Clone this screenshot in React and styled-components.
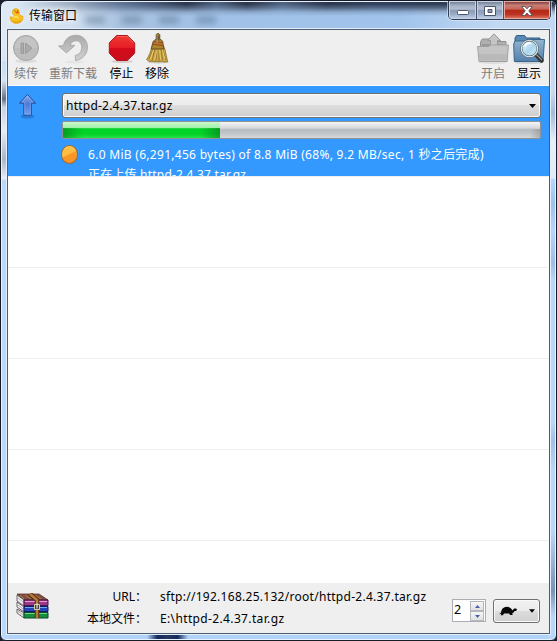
import React from "react";
import styled, { createGlobalStyle } from "styled-components";

const Global = createGlobalStyle`
  * { box-sizing: border-box; }
  html, body { margin: 0; padding: 0; overflow: hidden; }
  body {
    width: 557px;
    height: 641px;
    background: #1a1f2b;
    font-family: "Noto Sans", "Noto Sans CJK SC", sans-serif;
    font-size: 12px;
    color: #000;
  }
`;

const Frame = styled.div`
  width: 557px;
  height: 641px;
  display: flex;
  flex-direction: column;
  border: 1px solid #171c28;
  border-radius: 7px 7px 6px 6px;
  overflow: hidden;
  padding: 0 5px 5px;
  box-shadow: inset 0 0 0 1px #e6f2fd;
  background:
    linear-gradient(90deg, transparent, #14285c 25%, #27365c 50%, #14285c 75%, transparent) 146px 100% / 41px 6px no-repeat,
    linear-gradient(#ffffff00 29px, #d6e2f1 80px, #657183 98px, #c6d2e1 106px, #e7edf5 130px, #a9b6c7 158px, #e8eff7 178px, #b9d9fa 179px) 0 0 / 8px 100% no-repeat,
    linear-gradient(#ffffff00 29px, #cbdaf0 90px, #a3bbdc 112px, #e9effa 140px, #e0eaf9 177px, #b5d8ff 178px, #9fc2eb 203px, #b5d6fc 230px, #9dbfe6 262px, #b8d8fb 280px, #b8d8fb 420px, #9fc0e8 440px, #b8d8fb 470px, #b8d8fb 530px, #7793b5 590px, #b8d8fb 615px) 100% 0 / 8px 100% no-repeat,
    linear-gradient(90deg, #dfe9f6 0, #d1dfef 70px, #a8c2e1 120px, #a1c1e8 230px, #a1c4ec 400px, #c3d8f2 500px, #c3d8f2 100%) 0 0 / 100% 60px no-repeat,
    #b1d3f8;
`;

const TitleBar = styled.header`
  height: 28px;
  flex: none;
  display: flex;
  align-items: flex-start;
  position: relative;
  &::before {
    content: "";
    position: absolute;
    inset: 1px -4px auto;
    height: 14px;
    background: linear-gradient(90deg, #566b88 0, #40526f 150px, #222c40 185px, #4a5d7a 215px, #222b3d 245px, #4a5d7a 280px, #222c40 325px, #2a3852 370px, #1c2636 100%);
    mask-image: linear-gradient(#000 2px, #000a 6px, #0003 10px, transparent 14px), linear-gradient(90deg, transparent 15px, #0008 90px, #000e 150px);
    mask-composite: intersect;
  }
  > * { position: relative; }
`;

const Title = styled.h1`
  margin: 5px 0 0 4px;
  font: 12px/18px "Noto Sans CJK SC", sans-serif;
  text-shadow: 0 0 5px #fff, 0 0 7px #fff;
`;

const TitleIcon = styled.svg`
  margin: 7px 0 0 3px;
  filter: drop-shadow(0 0 2px #fff8);
`;

const Smudges = styled.div`
  display: flex;
  gap: 17px;
  margin: 15px 0 0 8px;
  filter: blur(3px);
  opacity: 0.35;
`;

const Smudge = styled.i`
  width: 20px;
  height: 8px;
  background: #365371;
`;

const WindowButtons = styled.div`
  display: flex;
  margin-left: auto;
  height: 19px;
  border: 1px solid #303c52;
  border-top: 0;
  border-radius: 0 0 5px 5px;
  overflow: hidden;
  box-shadow: 0 0 0 1px #dcebfc99;
`;

const WindowButton = styled.button`
  width: ${(p) => p.$width}px;
  padding: 0;
  border: 0;
  border-left: ${(p) => (p.$first ? "0" : "1px solid #46526a")};
  display: grid;
  place-items: center;
  align-content: center;
  padding-top: ${(p) => (p.$first ? 5 : 1)}px;
  box-shadow: inset 0 0 0 1px ${(p) => (p.$close ? "#eca89b" : "#c7d2e4")};
  background: ${(p) =>
    p.$close
      ? "linear-gradient(#6e3437 0, #c77e75 25%, #c76457 46%, #b42717 50%, #bc3522 75%, #df8068 100%)"
      : "linear-gradient(#69778c 0, #a9b5c8 28%, #b3bfd0 46%, #8b9bb5 50%, #96a7c3 70%, #c3d3ea 100%)"};
  svg { display: block; }
`;

const Client = styled.main`
  flex: 1;
  min-height: 0;
  display: flex;
  flex-direction: column;
  border: 1px solid #4c5d71;
  box-shadow: 0 0 0 1px #e3f0fc;
  background: #fff;
  margin: 0 1px 1px;
`;

const Toolbar = styled.nav`
  flex: none;
  height: 56px;
  display: flex;
  background: #efefef;
  border-bottom: 1px solid #fbfbfb;
  padding: 3px 3px 0 5px;
`;

const ToolItem = styled.button`
  width: ${(p) => p.$width}px;
  margin-left: ${(p) => (p.$push ? "auto" : `${p.$gap || 0}px`)};
  padding: 0;
  border: 0;
  background: none;
  display: flex;
  flex-direction: column;
  align-items: center;
  font: 12px/18px "Noto Sans CJK SC", sans-serif;
  white-space: nowrap;
  color: ${(p) => (p.$disabled ? "#7d7d7d" : "#000")};
  svg { display: block; flex: none; margin-bottom: -1px; }
`;

const List = styled.section`
  flex: 1;
  min-height: 0;
  overflow: hidden;
`;

const Row = styled.div`
  height: 91px;
  border-bottom: 1px solid #eeeeee;
  background: ${(p) => (p.$active ? "#3399ff" : "#fff")};
  display: grid;
  grid-template-columns: 54px 479px;
  overflow: hidden;
`;

const Direction = styled.div`
  padding: 7px 0 0 9px;
`;

const Details = styled.div`
  padding-top: 7px;
  min-width: 0;
`;

const Combo = styled.div`
  height: 25px;
  border: 1px solid #707070;
  border-radius: 3px;
  box-shadow: inset 0 0 0 1px #fafafa;
  background: linear-gradient(#f2f2f2 0, #ebebeb 48%, #dddddd 50%, #cfcfcf 100%);
  display: flex;
  align-items: center;
  justify-content: space-between;
  padding: 0 4px 0 3px;
  letter-spacing: 0.23px;
`;

const Track = styled.div`
  height: 18px;
  margin-top: 3px;
  border: 1px solid #929292;
  border-radius: 2px;
  background:
    linear-gradient(90deg, #7778 0, transparent 8px, transparent 467px, #7776 100%) 0 7px / 100% 9px no-repeat,
    linear-gradient(#f5f5f5 0, #d7dadd 35%, #c9cdd0 43%, #b6bcc1 48%, #c4c8cc 75%, #d6d9db 100%);
`;

const Fill = styled.div`
  height: 100%;
  background:
    linear-gradient(90deg, #08791999 0, transparent 20px, transparent 137px, #08791999 100%) 0 6px / 100% 11px no-repeat,
    linear-gradient(#c9f8cc 0, #a2efaa 36%, #01d328 42%, #03d327 76%, #24e64a 100%);
`;

const Status = styled.div`
  display: grid;
  grid-template-columns: 26px 1fr;
  margin-top: 6px;
  margin-left: -1px;
  color: #fff;
  line-height: 20px;
  white-space: nowrap;
`;

const Light = styled.div`
  width: 17px;
  height: 19px;
  border-radius: 50%;
  border: 1px solid #a66822;
  box-shadow: inset 0 1px 1px #ffd87c;
  background: linear-gradient(155deg, #ffbd42 0 44%, #f9982a 52%, #f79120 100%);
`;

const StatusText = styled.div`
  padding-left: 1px;
  letter-spacing: ${(p) => p.$spacing || 0}px;
`;

const Footer = styled.footer`
  flex: none;
  height: 50px;
  background: #efefef;
  display: grid;
  grid-template-columns: 44px 96px 292px 41px 47px;
  align-items: start;
  padding-left: 8px;
`;

const Archive = styled.svg`
  display: block;
  margin-top: 10px;
`;

const Lines = styled.div`
  padding-top: 3px;
  line-height: 22px;
  white-space: nowrap;
  text-align: ${(p) => (p.$right ? "right" : "left")};
  padding-left: ${(p) => (p.$right ? 0 : 4)}px;
  padding-right: ${(p) => (p.$right ? 9 : 0)}px;
`;

const Line = styled.div`
  letter-spacing: ${(p) => p.$spacing || 0}px;
`;

const Spinner = styled.div`
  width: 34px;
  height: 23px;
  margin-top: 16px;
  margin-left: 4px;
  border: 1px solid #abadb3;
  background: #fff;
  display: flex;
  justify-content: space-between;
  padding-left: 1px;
  line-height: 20px;
  font-size: 12.5px;
`;

const Steps = styled.div`
  display: grid;
  grid-template-rows: 10px 10px;
  gap: 0;
  width: 15px;
  padding: 1px 1px 0 0;
`;

const Step = styled.button`
  padding: 0;
  border: 1px solid #b5b7be;
  background: linear-gradient(#f6f6f6, #e2e2e2);
  display: grid;
  place-items: center;
  svg { display: block; }
`;

const SpeedButton = styled.button`
  width: 47px;
  height: 24px;
  margin-top: 16px;
  margin-left: 4px;
  border: 1px solid #707070;
  border-radius: 3px;
  box-shadow: inset 0 0 0 1px #fafafa;
  background: linear-gradient(#f2f2f2 0, #ebebeb 48%, #dddddd 50%, #cfcfcf 100%);
  display: flex;
  align-items: center;
  justify-content: space-between;
  padding: 0 4px 0 5px;
`;

const Duck = () => (
  <TitleIcon width="16" height="16" viewBox="0 0 16 16">
    <path d="M1.200 8.800 4 9.300c1.300-.6 1.500-1.300.8-2C2.300 5 3.200.8 6.600.6c3.200-.1 4.800 3 3.200 5.700 1.700.5 2.300 1.900 4 1.800.8 4.500-1.600 7.300-6.400 7.300-4.300 0-6.500-2.500-6.200-6.600Z" fill="#f8c21c" stroke="#d99710" strokeWidth=".6" />
    <path d="M6 4.300c1.400-1 3-.9 4.200 0-.6 1.500-2.900 1.900-4.200 0Z" fill="#e9501c" />
    <circle cx="6" cy="2.800" r=".6" fill="#6b4712" />
    <circle cx="8.600" cy="2.800" r=".6" fill="#6b4712" />
    <path d="M3 12c2.500 2.200 6.500 2.200 9.500-.5-.8 4-8 4.600-9.500.5Z" fill="#e39b10" />
    <path d="M4.500 9.500c1.500-.8 3.500-.8 5 .2" fill="none" stroke="#ffe96c" strokeWidth="1.300" />
  </TitleIcon>
);

const ResumeIcon = () => (
  <svg width="32" height="32" viewBox="0 0 32 32">
    <ellipse cx="16" cy="28" rx="11" ry="2" fill="#ddd" />
    <circle cx="16" cy="15" r="12.500" fill="#bdbdbd" stroke="#a5a5a5" />
    <path d="M5 15a11 11 0 0 1 22 0" fill="#c8c8c8" opacity=".7" />
    <path d="M11 10h2.500v10.500H11ZM15.500 10l6.500 5.200-6.500 5.300Z" fill="#aaa" stroke="#949494" strokeWidth=".8" />
  </svg>
);

const ReloadIcon = () => (
  <svg width="32" height="32" viewBox="0 0 32 32">
    <defs>
      <linearGradient id="reload" x2="0" y2="1"><stop stopColor="#aaa" /><stop offset="1" stopColor="#d0d0d0" /></linearGradient>
    </defs>
    <ellipse cx="18" cy="29" rx="10" ry="1.500" fill="#e5e5e5" />
    <path d="M1.500 13 6.500 12.500C7.500 6 13 2 19.500 2.200 26 2.500 30.500 7.500 30.500 14c0 7-4.500 12.500-12 13.500l-.3-5c4-.8 6.500-4 6.500-8 0-4-2.300-6.700-5.700-6.700-3 0-5 1.700-5.700 4.700l4.700-.2L9.500 20Z" fill="url(#reload)" stroke="#a3a3a3" strokeWidth=".8" />
  </svg>
);

const StopIcon = () => (
  <svg width="32" height="32" viewBox="0 0 32 32">
    <defs>
      <linearGradient id="stop" x2="0" y2="1"><stop stopColor="#ef3a30" /><stop offset=".5" stopColor="#e51d25" /><stop offset=".51" stopColor="#d40b1a" /><stop offset="1" stopColor="#c70f1d" /></linearGradient>
    </defs>
    <ellipse cx="16" cy="28.500" rx="11" ry="1.500" fill="#d7caca" />
    <path d="M10.700 2.500h10.600l7.400 7.300v10.400l-7.400 7.300H10.700l-7.400-7.300V9.800Z" fill="url(#stop)" stroke="#ad1420" />
    <path d="M11.100 3.500h9.800l6.800 6.700" fill="none" stroke="#ff7065" strokeWidth=".7" />
  </svg>
);

const BroomIcon = () => (
  <svg width="32" height="32" viewBox="0 0 32 32">
    <ellipse cx="17" cy="29" rx="11" ry="1.500" fill="#cecbbf" />
    <path d="M11.500 12h10.500l2 4.500 2.700 12.300-3.700.2-2.500-.8-2 .8-2.500-.6-2 .4-3-.6-2.500.2-3-1.900C8.500 22.500 9.600 18 10.500 15Z" fill="#cda94b" stroke="#82601c" strokeWidth=".7" />
    <path d="M12 16 8 26m6-10-3 11.500m5-11-1.200 11M18 17v11m2-12 1.500 11M21.500 16l3.500 11" stroke="#8b681e" strokeWidth=".8" fill="none" />
    <path d="M13 15 9.500 26m6.500-9-2.500 10m5-10 1 9m1.500-10 3 10" stroke="#f1d778" strokeWidth=".8" fill="none" />
    <path d="M15.200 2c.2-2 3.400-2 3.600 0v4l2.800 2 1.400 8H10.300L12 8.500l3.200-2.500Z" fill="#ad852e" stroke="#55401f" strokeWidth=".8" />
    <path d="M11.300 11.300 22 12.500M12.200 8.800l9.300 1" stroke="#a33a20" strokeWidth="1.100" />
    <path d="M15.400 2.500h3v5h-3Z" fill="#665334" />
    <path d="M16.200 2v8" stroke="#d0b581" strokeWidth=".7" />
  </svg>
);

const OpenIcon = () => (
  <svg width="32" height="32" viewBox="0 0 32 32">
    <ellipse cx="16" cy="29.500" rx="14" ry="1.500" fill="#ddd" />
    <path d="M3.500 17V9l1.800-3h8l2 2.500H29v9" fill="#b0b0b0" stroke="#929292" />
    <path d="M5 11h21v4H5Z" fill="#999" />
    <path d="m17 .8 6.500 6.700h-3v7h-7v-7h-3Z" fill="#c5c5c5" stroke="#989898" />
    <path d="M.6 13.500h11l2-1.500h17.800l-1.200 16.500H2Z" fill="#c4c4c4" stroke="#a1a1a1" />
    <path d="M2 21h28l-.6 6.500H2.600Z" fill="#b9b9b9" />
  </svg>
);

const ShowIcon = () => (
  <svg width="32" height="32" viewBox="0 0 32 32">
    <defs>
      <linearGradient id="folder" x2="0" y2="1"><stop stopColor="#93b5d1" /><stop offset="1" stopColor="#527fac" /></linearGradient>
      <linearGradient id="lens" x2="1" y2="1"><stop stopColor="#f4fbff" /><stop offset=".55" stopColor="#a9d5ed" /><stop offset="1" stopColor="#d9f3fc" /></linearGradient>
    </defs>
    <ellipse cx="16" cy="29.500" rx="14" ry="1.500" fill="#cbd0d4" />
    <path d="M2 12V5l1.500-2.500h8L13.500 5H27v8" fill="#5989b4" stroke="#315d87" />
    <path d="M.7 11 2 8h10l2-1.500h17.500L30 28.500H1.300Z" fill="url(#folder)" stroke="#3b678f" />
    <path d="m23 21.500 5.500 6" stroke="#33383b" strokeWidth="4.500" strokeLinecap="round" />
    <path d="m22.500 20.500 6 6.200" stroke="#999" strokeWidth="1.200" strokeLinecap="round" />
    <circle cx="16.500" cy="15.500" r="8.200" fill="url(#lens)" stroke="#58656b" strokeWidth="2.300" />
    <circle cx="16.500" cy="15.500" r="8.200" fill="none" stroke="#e2ebed" strokeWidth="1.100" />
    <path d="M12 13.500c.5-3 3.500-4 6-3" stroke="#fff" strokeWidth="1.600" fill="none" />
  </svg>
);

const UploadArrow = () => (
  <svg width="22" height="26" viewBox="0 0 22 26">
    <defs>
      <linearGradient id="upload" x2="0" y2="1"><stop stopColor="#91b5f3" /><stop offset=".45" stopColor="#4c79d7" /><stop offset="1" stopColor="#6ba0ee" /></linearGradient>
    </defs>
    <ellipse cx="10.500" cy="23.500" rx="7" ry="2" fill="#1758a4" opacity=".45" />
    <path d="m10.500 1.500 8 8.700h-4.200v12H6.800v-12H2.500Z" fill="url(#upload)" stroke="#2449a0" strokeLinejoin="round" />
    <path d="m10.500 3 5.700 6.200h-2.900v12H7.800v-12H4.800Z" fill="none" stroke="#93bbf6" strokeWidth=".5" />
  </svg>
);

const Chevron = ({ width = 7 }) => (
  <svg width={width} height="4" viewBox="0 0 7 4"><path d="M0 0h7L3.500 4Z" fill="#000" /></svg>
);

const ArchiveIcon = () => (
  <Archive width="33" height="26" viewBox="0 0 33 26">
    <path d="M1 1h22l9 6H8Z" fill="#80503d" stroke="#55221f" strokeWidth=".7" />
    <path d="m4 2 4 4m1-4 6 4m4-4 6 4" stroke="#ad7d50" strokeWidth="1" />
    <path d="m1 2 7 5v6L1 8Zm0 7 7 5v5l-7-5Zm0 7 7 4v5l-7-5Z" fill="#eee" stroke="#4e424c" strokeWidth=".8" />
    <path d="m2 5 5 4M2 12l5 4M2 18l5 4" stroke="#948a91" strokeWidth=".7" />
    <path d="M8 7h24v5.500H8Z" fill="#993b89" stroke="#4b164c" />
    <path d="M8 13.500h24v5H8Z" fill="#2446ba" stroke="#131c65" />
    <path d="M8 19.500h24V25H8Z" fill="#17903e" stroke="#0c482b" />
    <path d="M9 8.500h22" stroke="#ed9bd2" />
    <path d="M9 14.500h22" stroke="#75a8f1" />
    <path d="M9 20.500h22" stroke="#70d784" />
    <path d="m14 1 7 6v18" stroke="#5c2a14" strokeWidth="4.500" fill="none" />
    <path d="m14 1 7 6v18" stroke="#b27d37" strokeWidth="2.500" fill="none" />
    <path d="M18.500 11.500h5v5h-5Z" fill="#4b4237" stroke="#d3cba5" />
    <path d="M21 10.500v5" stroke="#fff" />
  </Archive>
);

const Turtle = () => (
  <svg width="18" height="10" viewBox="0 0 18 10">
    <path d="M.3 8.200 2 6.500c.5-3.500 2.500-5.600 5.800-5.700 2.900 0 4.600 1.900 6 3.600.5-1.400 1.200-2 2.200-2 1.300 0 2 .6 1.900 1.600-.2 1-1.500 1-2.500 1.300-.6 1-1.200 1.900-2.300 2.100l.7 1.700h-2.700l-1-1.500H5L3.900 9.200H1.700l.7-1.400Z" fill="#080808" />
  </svg>
);

const leftTools = [
  { label: "续传", width: 26, disabled: true, Icon: ResumeIcon },
  { label: "重新下载", width: 48, gap: 10, disabled: true, Icon: ReloadIcon },
  { label: "停止", width: 26, gap: 11.5, Icon: StopIcon },
  { label: "移除", width: 26, gap: 9.5, Icon: BroomIcon },
];

export default function App() {
  return (
    <>
      <Global />
      <Frame>
        <TitleBar>
          <Duck />
          <Title>传输窗口</Title>
          <Smudges><Smudge /><Smudge /><Smudge /><Smudge /></Smudges>
          <WindowButtons>
            <WindowButton $width={27} $first aria-label="minimize">
              <svg width="12" height="5" viewBox="0 0 12 5"><rect x=".5" y=".5" width="11" height="4" rx="1" fill="#fff" stroke="#4b566e" /></svg>
            </WindowButton>
            <WindowButton $width={27} aria-label="maximize">
              <svg width="12" height="10" viewBox="0 0 12 10"><path d="M.5.5h11v9H.5ZM4 3.500v3h4v-3Z" fill="#fff" stroke="#4b566e" fillRule="evenodd" /></svg>
            </WindowButton>
            <WindowButton $width={47} $close aria-label="close">
              <svg width="12" height="10" viewBox="0 0 12 10"><path d="M.8.5h3L6 2.800 8.200.5h3L7.800 4.900l3.600 4.600H8.200L6 7.100 3.800 9.500H.6l3.600-4.600Z" fill="#fff" stroke="#55505f" strokeWidth=".9" /></svg>
            </WindowButton>
          </WindowButtons>
        </TitleBar>
        <Client>
          <Toolbar>
            {leftTools.map(({ label, width, gap, disabled, Icon }) => (
              <ToolItem key={label} $width={width} $gap={gap} $disabled={disabled}><Icon />{label}</ToolItem>
            ))}
            <ToolItem $width={34} $push $disabled><OpenIcon />开启</ToolItem>
            <ToolItem $width={34} $gap={2}><ShowIcon />显示</ToolItem>
          </Toolbar>
          <List>
            <Row $active>
              <Direction><UploadArrow /></Direction>
              <Details>
                <Combo>httpd-2.4.37.tar.gz<Chevron /></Combo>
                <Track><Fill style={{ width: "157px" }} /></Track>
                <Status>
                  <Light />
                  <div>
                    <StatusText $spacing={0.29}>6.0 MiB (6,291,456 bytes) of 8.8 MiB (68%, 9.2 MB/sec, 1 秒之后完成)</StatusText>
                    <StatusText $spacing={0.2}>正在上传 httpd-2.4.37.tar.gz</StatusText>
                  </div>
                </Status>
              </Details>
            </Row>
            <Row /><Row /><Row /><Row /><Row />
          </List>
          <Footer>
            <ArchiveIcon />
            <Lines $right><Line>URL：</Line><Line>本地文件：</Line></Lines>
            <Lines>
              <Line $spacing={0.28}>sftp://192.168.25.132/root/httpd-2.4.37.tar.gz</Line>
              <Line $spacing={0.36}>E:\httpd-2.4.37.tar.gz</Line>
            </Lines>
            <Spinner>
              2
              <Steps>
                <Step aria-label="increase"><svg width="5" height="3" viewBox="0 0 5 3"><path d="M0 3h5L2.500 0Z" fill="#4a5fa8" /></svg></Step>
                <Step aria-label="decrease"><svg width="5" height="3" viewBox="0 0 5 3"><path d="M0 0h5L2.500 3Z" fill="#4a5fa8" /></svg></Step>
              </Steps>
            </Spinner>
            <SpeedButton aria-label="speed"><Turtle /><Chevron width={6} /></SpeedButton>
          </Footer>
        </Client>
      </Frame>
    </>
  );
}
